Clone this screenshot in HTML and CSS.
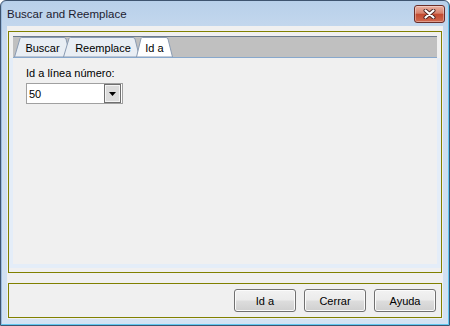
FILE: index.html
```html
<!doctype html>
<html lang="es">
<head>
  <meta charset="utf-8">
  <title>Buscar and Reemplace</title>
  <meta name="viewport" content="width=device-width, initial-scale=1">
  <link rel="stylesheet" href="styles.css">
</head>

<body>

  <div class="window">
    <div class="titlebar">
      <span class="title">Buscar and Reemplace</span>
      <button class="close" type="button" aria-label="Cerrar">
        <svg width="13" height="10" viewBox="0 0 13 10">
          <path d="M2.5,1.5 L10.5,8.5 M10.5,1.5 L2.5,8.5" stroke="#4a2320" stroke-width="4" stroke-linecap="round"/>
          <path d="M2.5,1.5 L10.5,8.5 M10.5,1.5 L2.5,8.5" stroke="#ffffff" stroke-width="2.2" stroke-linecap="round"/>
        </svg>
      </button>
    </div>

    <div class="client">
      <div class="group group-main">
        <div class="tabstrip">
          <div class="tab tab-buscar">
            <svg class="tab-bg" width="57" height="20" viewBox="0 0 57 20"><path d="M0.5,20 L6,1.5 Q6.5,0.5 7.5,0.5 L50,0.5 Q51.5,0.5 52,2 L56.5,20 Z"/></svg>
            <span>Buscar</span>
          </div>
          <div class="tab tab-reemplace">
            <svg class="tab-bg" width="77" height="20" viewBox="0 0 77 20"><path d="M0.5,20 L6,1.5 Q6.5,0.5 7.5,0.5 L70,0.5 Q71.5,0.5 72,2 L76.5,20 Z"/></svg>
            <span>Reemplace</span>
          </div>
          <div class="tab tab-ida active">
            <svg class="tab-bg" width="37" height="20" viewBox="0 0 37 20"><path d="M0.5,20 L5,1.5 Q5.5,0.5 6.5,0.5 L30,0.5 Q31.5,0.5 32,2 L36.5,20 Z"/></svg>
            <span>Id a</span>
          </div>
        </div>

        <div class="panel">
          <label class="field-label" for="line-number">Id a línea número:</label>
          <div class="combo" id="line-number">
            <span class="combo-value">50</span>
            <span class="combo-btn">
              <svg width="7" height="4" viewBox="0 0 7 4"><path d="M0,0 L7,0 L3.5,4 Z" fill="#000"/></svg>
            </span>
          </div>
        </div>
      </div>

      <div class="group group-buttons">
        <button class="btn" type="button">Id a</button>
        <button class="btn" type="button">Cerrar</button>
        <button class="btn" type="button">Ayuda</button>
      </div>
    </div>
  </div>

</body>
</html>
```

FILE: styles.css
```css
* {
  box-sizing:border-box;
}
body {
  margin:0;
  width:450px;
  height:326px;
  font-family:'Liberation Sans', Arial, sans-serif;
  font-size:11px;
  color:#000;
  background:#fff;
}
.window {
  width:450px;
  height:326px;
  display:flex;
  flex-direction:column;
  border:1px solid #3e5470;
  border-radius:6px 6px 0 0;
  background:linear-gradient(#b8d0ea, #c9dbef 40px, #d3e2f3);
  box-shadow:inset -1px -1px 0 #63c8f0, inset 1px 0 0 #9dbbdc;
}
.titlebar {
  height:25px;
  display:flex;
  align-items:center;
  justify-content:space-between;
  padding:0 4px 0 6px;
}
.title {
  font-size:11.5px;
  color:#1c1c30;
}
.close {
  width:31px;
  height:18px;
  padding:0;
  margin:0;
  border:1px solid #6a2d28;
  border-radius:3px;
  background:linear-gradient(#eab1a2, #d7826c 45%, #c24a30 52%, #d0694f);
  box-shadow:inset 0 0 0 1px rgba(255,255,255,0.35);
  display:flex;
  align-items:center;
  justify-content:center;
}
.client {
  flex:1;
  margin:0 6px 6px;
  padding:5px 1px 1px;
  background:#f0f0f0;
  display:flex;
  flex-direction:column;
}
.group {
  border:1px solid #808000;
}
.group-main {
  flex:1;
  display:flex;
  flex-direction:column;
  padding:4px 0;
  margin-bottom:10px;
}
.tabstrip {
  height:22px;
  margin:0 4px;
  background:#c0c0c0;
  border-top:1px solid #6c7a8c;
  border-bottom:1px solid #88a8cc;
  display:flex;
  align-items:flex-end;
}
.tab {
  position:relative;
  height:20px;
  display:flex;
  align-items:center;
  justify-content:center;
  padding-top:2px;
}
.tab span {
  position:relative;
}
.tab-bg {
  position:absolute;
  left:0;
  top:0;
}
.tab-bg path {
  fill:#e9eef4;
  stroke:#8a9bb2;
  stroke-width:1;
}
.tab.active .tab-bg path {
  fill:#ffffff;
}
.tab-buscar {
  width:57px;
  margin-left:1px;
}
.tab-reemplace {
  width:77px;
  margin-left:-8px;
  padding-left:3px;
}
.tab-ida {
  width:37px;
  margin-left:-4px;
}
.panel {
  flex:1;
  border:4px solid #e4edf8;
  border-top:0;
  padding:9px 13px 0;
}
.field-label {
  display:block;
  line-height:13px;
  margin-bottom:3px;
}
.combo {
  width:97px;
  height:21px;
  border:1px solid #a0a0a0;
  background:#fff;
  display:flex;
  align-items:center;
  justify-content:space-between;
  padding:0 1px 0 2px;
}
.combo-btn {
  width:17px;
  height:19px;
  border:1px solid #6f6f6f;
  background:#dcdcdc;
  box-shadow:inset 0 0 0 1px #f4f4f4;
  display:flex;
  align-items:center;
  justify-content:center;
}
.group-buttons {
  height:35px;
  display:flex;
  justify-content:flex-end;
  align-items:center;
  gap:8px;
  padding:0 5px;
}
.btn {
  width:62px;
  height:23px;
  margin:0;
  padding:0;
  border:1px solid #707070;
  border-radius:3px;
  background:linear-gradient(#f2f2f2, #ebebeb 48%, #dddddd 52%, #cfcfcf);
  box-shadow:inset 0 0 0 1px #fbfbfb;
  font-family:'Liberation Sans', Arial, sans-serif;
  font-size:11px;
  color:#000;
}
```
